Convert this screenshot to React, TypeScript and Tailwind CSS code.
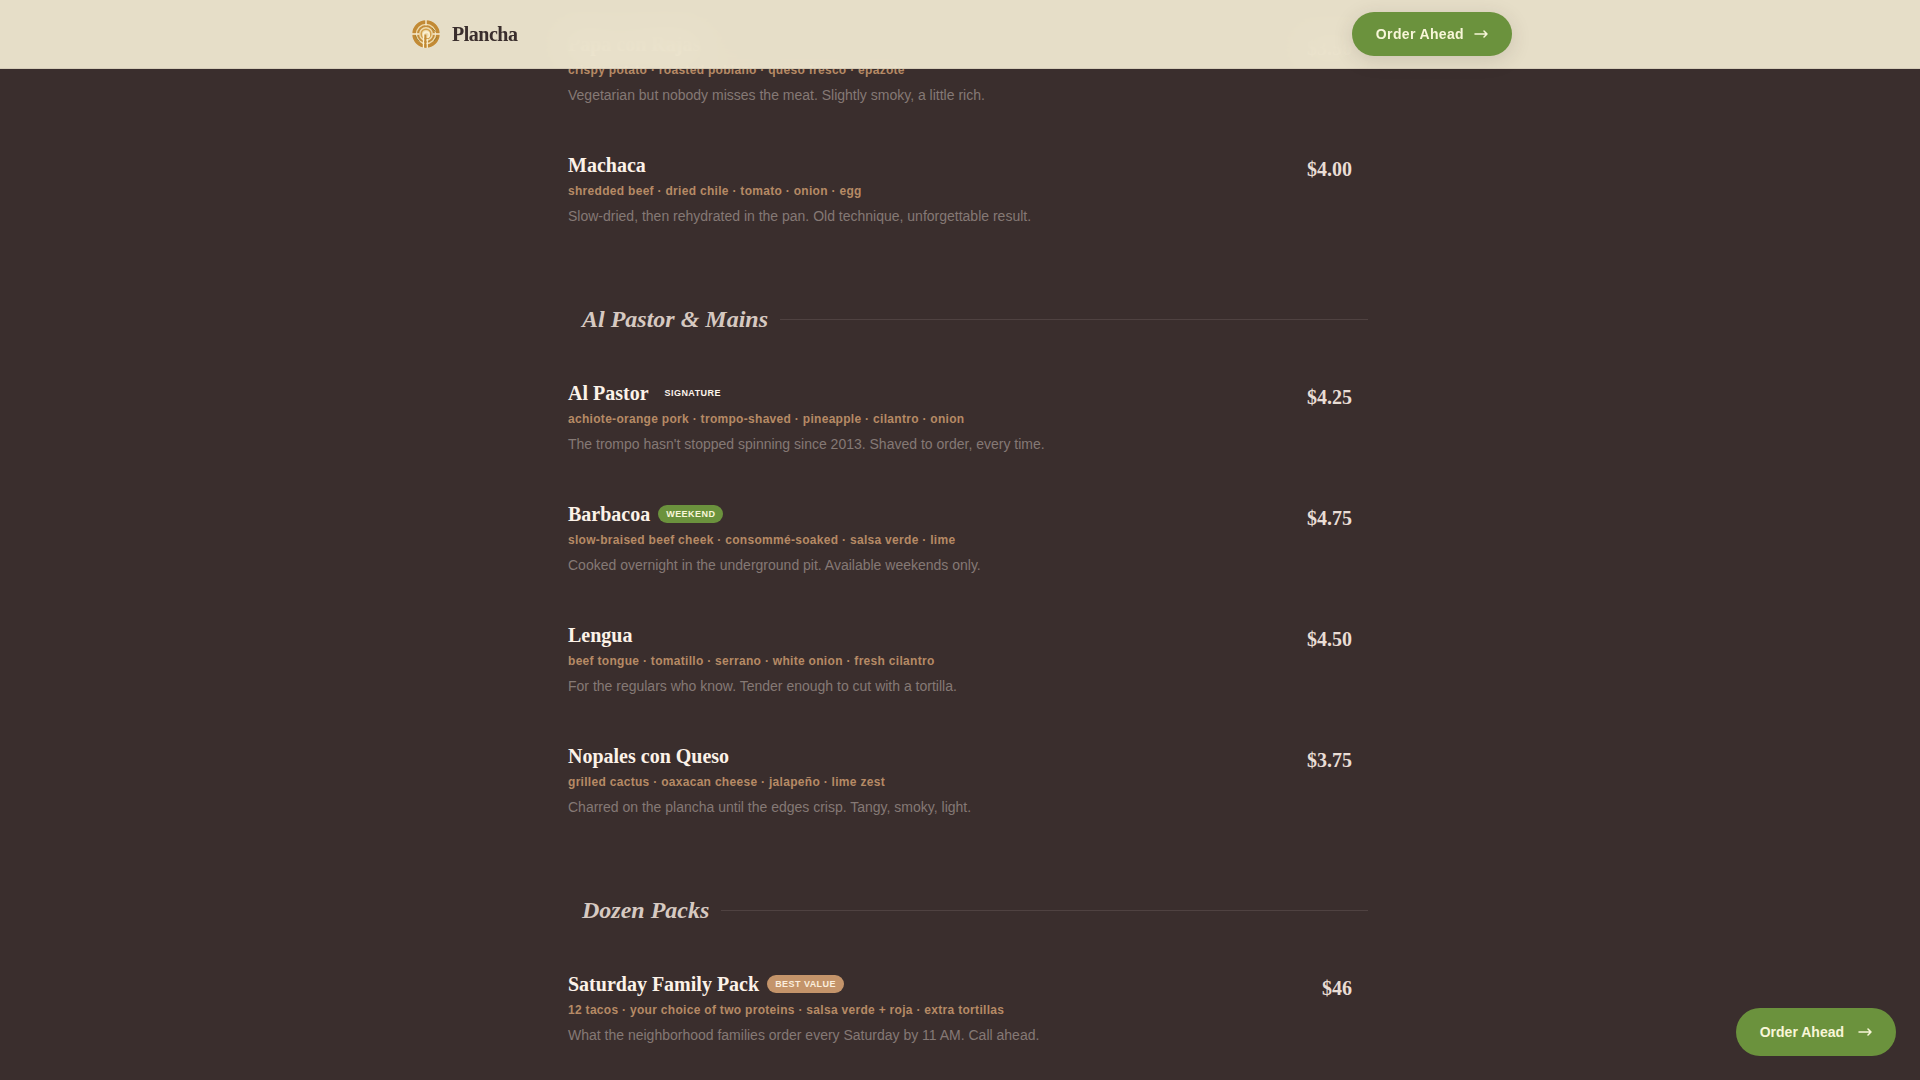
interface MenuItem {
    name: string;
    badge?: { label: string; tone: 'plain' | 'green' | 'tan' };
    ingredients: string;
    description: string;
    price: string;
}

interface MenuGroup {
    title?: string;
    items: MenuItem[];
}

const groups: MenuGroup[] = [
    {
        items: [
            {
                name: 'Papa con Rajas',
                ingredients: 'crispy potato · roasted poblano · queso fresco · epazote',
                description: 'Vegetarian but nobody misses the meat. Slightly smoky, a little rich.',
                price: '$3.50',
            },
            {
                name: 'Machaca',
                ingredients: 'shredded beef · dried chile · tomato · onion · egg',
                description: 'Slow-dried, then rehydrated in the pan. Old technique, unforgettable result.',
                price: '$4.00',
            },
        ],
    },
    {
        title: 'Al Pastor & Mains',
        items: [
            {
                name: 'Al Pastor',
                badge: { label: 'Signature', tone: 'plain' },
                ingredients: 'achiote-orange pork · trompo-shaved · pineapple · cilantro · onion',
                description: "The trompo hasn't stopped spinning since 2013. Shaved to order, every time.",
                price: '$4.25',
            },
            {
                name: 'Barbacoa',
                badge: { label: 'Weekend', tone: 'green' },
                ingredients: 'slow-braised beef cheek · consommé-soaked · salsa verde · lime',
                description: 'Cooked overnight in the underground pit. Available weekends only.',
                price: '$4.75',
            },
            {
                name: 'Lengua',
                ingredients: 'beef tongue · tomatillo · serrano · white onion · fresh cilantro',
                description: 'For the regulars who know. Tender enough to cut with a tortilla.',
                price: '$4.50',
            },
            {
                name: 'Nopales con Queso',
                ingredients: 'grilled cactus · oaxacan cheese · jalapeño · lime zest',
                description: 'Charred on the plancha until the edges crisp. Tangy, smoky, light.',
                price: '$3.75',
            },
        ],
    },
    {
        title: 'Dozen Packs',
        items: [
            {
                name: 'Saturday Family Pack',
                badge: { label: 'Best Value', tone: 'tan' },
                ingredients: '12 tacos · your choice of two proteins · salsa verde + roja · extra tortillas',
                description: 'What the neighborhood families order every Saturday by 11 AM. Call ahead.',
                price: '$46',
            },
        ],
    },
];

const badgeTones = {
    plain: 'text-[#fdf4ec]',
    green: 'bg-[#6b923d] text-[#f8f6d8]',
    tan: 'bg-[#c4946a] text-[#fbeedd]',
};

function Logo() {
    return (
        <svg viewBox="-4 -4 36 36" className="size-9" fill="none" aria-hidden="true">
            <circle cx="14" cy="14" r="13.5" fill="#efdcae" />
            <circle cx="14" cy="14" r="12" stroke="#c28a35" strokeWidth="3.4" />
            <circle cx="14" cy="14" r="8" stroke="#c48d3a" strokeWidth="2" />
            <circle cx="14" cy="14" r="4.8" stroke="#d3a04c" strokeWidth="1.6" />
            <path d="M14 0v5.500M0 14h7M21 14h7" stroke="#f7ecd0" strokeWidth="1.4" />
            <path d="M3.500 15.500a11 11 0 0 0 4 6M22 21l3-4M20 8l3.500 3.500" stroke="#8f7a35" strokeWidth="0.8" />
            <path d="M11.500 28V15a2.900 2.900 0 1 1 3.800 2.700" stroke="#fbf0d2" strokeWidth="1.400" />
            <path d="M13.400 27.500V14.500" stroke="#c28a35" strokeWidth="2" />
            <path d="M15.300 28v-9" stroke="#fbf0d2" strokeWidth="1.200" />
        </svg>
    );
}

function Arrow() {
    return (
        <svg viewBox="0 0 14 10" className="h-2.5 w-3.5" fill="none" stroke="currentColor" strokeWidth="1.5" strokeLinecap="round" strokeLinejoin="round" aria-hidden="true">
            <path d="M1 5h12M10 2l3 3-3 3" />
        </svg>
    );
}

function MenuRow({ item }: { item: MenuItem }) {
    return (
        <li className="flex items-start justify-between gap-6 px-4 pt-6 pb-[23px]">
            <div>
                <div className="flex items-center gap-2">
                    <h3 className="font-['Liberation_Serif',serif] text-[20px] leading-6 font-bold text-[#fcf2e8]">{item.name}</h3>
                    {item.badge && (
                        <span className={`rounded-full px-2 text-[9px] leading-[18px] font-bold tracking-wider uppercase ${badgeTones[item.badge.tone]}`}>
                            {item.badge.label}
                        </span>
                    )}
                </div>
                <p className="mt-1 text-[12px] leading-5 font-bold tracking-wide text-[#b68a65]">{item.ingredients}</p>
                <p className="mt-[5px] text-[14px] leading-[21px] text-[#857975]">{item.description}</p>
            </div>
            <span className="pt-1 font-['Liberation_Serif',serif] text-[20px] leading-6 font-bold text-[#e9ddd5]">{item.price}</span>
        </li>
    );
}

export default function App() {
    return (
        <div className="min-h-screen bg-[#3a2e2d] font-['Liberation_Sans',Arial,sans-serif]">
            <header className="fixed inset-x-0 top-0 z-40 border-b border-[#3a2e2d]/10 bg-[#f5eed6]/92 backdrop-blur-lg">
                <div className="mx-auto flex h-17 max-w-[1104px] items-center justify-between">
                    <a href="#top" className="flex items-center gap-2 font-['Liberation_Serif',serif] text-[20px] font-bold tracking-tight text-[#3a2e2d]">
                        <Logo />
                        Plancha
                    </a>
                    <a
                        href="#order"
                        className="flex h-11 items-center gap-2.5 rounded-full bg-[#6b923d] px-6 text-[14px] font-bold tracking-wide text-[#f8f6d8] shadow-[0_4px_20px_rgba(58,46,45,0.15)]"
                    >
                        Order Ahead
                        <Arrow />
                    </a>
                </div>
            </header>

            {/* Menu list */}
            <main id="top" className="mx-auto max-w-[816px] pt-2">
                {groups.map((group, i) => (
                    <section key={i}>
                        {group.title && (
                            <div className="mt-13 mb-[21px] flex items-center gap-3 pl-[30px]">
                                <h2 className="font-['Liberation_Serif',serif] text-[24px] leading-[34px] font-bold text-[#d6c9c1] italic">{group.title}</h2>
                                <div className="h-px flex-1 bg-[#4f4241]" />
                            </div>
                        )}
                        <ul>
                            {group.items.map((item) => (
                                <MenuRow key={item.name} item={item} />
                            ))}
                        </ul>
                    </section>
                ))}
            </main>

            {/* Floating order button */}
            <a
                href="#order"
                className="fixed right-6 bottom-6 z-50 flex h-12 items-center gap-3.5 rounded-full bg-[#6b923d] px-6 text-[14px] font-bold text-[#f8f6d8]"
            >
                Order Ahead
                <Arrow />
            </a>
        </div>
    );
}
